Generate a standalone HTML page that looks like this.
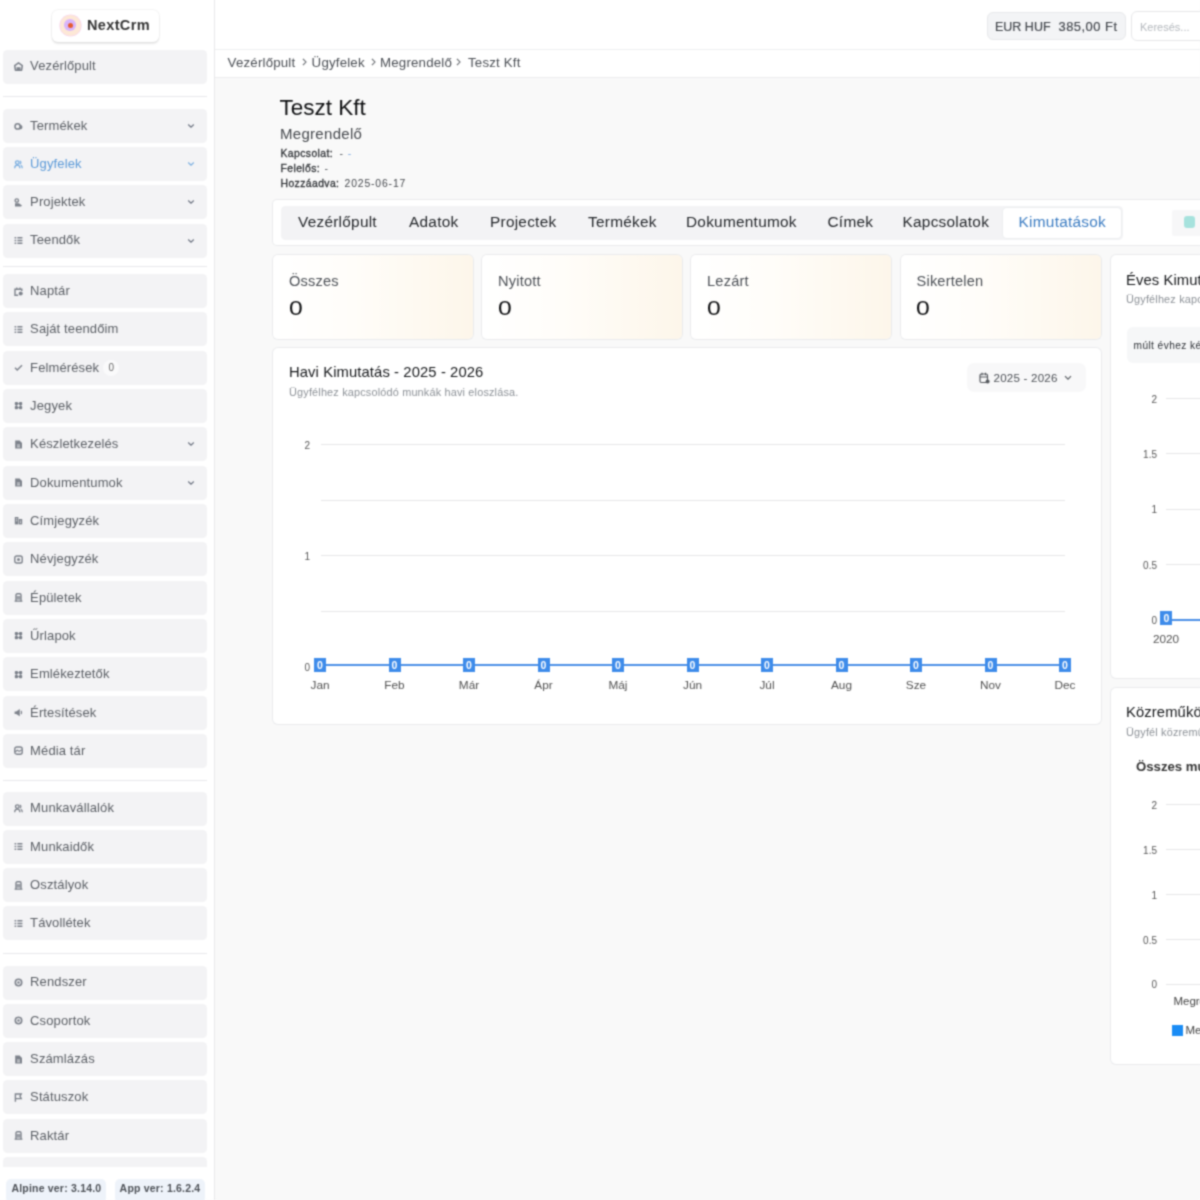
<!DOCTYPE html>
<html><head><meta charset="utf-8">
<style>
*{box-sizing:border-box;margin:0;padding:0}
html,body{width:1200px;height:1200px;overflow:hidden}
body{position:relative;background:#f9f9f9;font-family:"Liberation Sans",sans-serif;color:#1f2328}
.abs{position:absolute}
#wrap{position:absolute;left:0;top:0;width:1200px;height:1200px;background:#f9f9f9;filter:url(#bl)}
#side{position:absolute;left:0;top:0;width:215px;height:1200px;background:#fff;border-right:1.5px solid #e8e8ea}
.logo{position:absolute;left:51.5px;top:10px;width:107.5px;height:32px;background:#fff;border-radius:6px;box-shadow:0 1.5px 2px rgba(0,0,0,.09),0 0 0 1px rgba(0,0,0,.035)}
.logo .c1{position:absolute;left:8.3px;top:4.8px;width:21px;height:21px;border-radius:50%;background:#fde8d6;box-shadow:0 0 0 .6px #f6d3f0}
.logo .c2{position:absolute;left:4.3px;top:4.3px;width:12.4px;height:12.4px;border-radius:50%;background:#d9b5fb}
.logo .c3{position:absolute;left:3.7px;top:3.7px;width:5px;height:5px;border-radius:50%;background:#e65a2c}
.logo .t{position:absolute;left:35.5px;top:6.6px;font-size:14.5px;font-weight:bold;color:#333;letter-spacing:.35px}
.it{position:absolute;left:3.3px;width:203.3px;height:34px;background:#f3f3f5;border-radius:4.5px;color:#5c6066}
.it .ic{position:absolute;left:10.5px;top:12.5px;color:#7d828b}
.it .lb{position:absolute;left:26.8px;top:8.9px;font-size:13px;letter-spacing:.12px;white-space:nowrap}
.it .chev{position:absolute;left:184px;top:14px;color:#6b7280}
.it.act{color:#5b9ad8}
.it.act .ic,.it.act .chev{color:#7aaee0}
.it .bdg{position:absolute;left:100px;top:9px;width:16px;height:16px;border-radius:50%;background:#fafafb;font-size:10px;text-align:center;line-height:16px;color:#666}
.sep{position:absolute;left:3.3px;width:203.3px;height:1px;background:#e9e9eb}
.foot{position:absolute;left:0;top:1167px;width:214px;height:33px;background:#fff}
.ver{position:absolute;top:11.5px;height:24px;border-radius:5px;background:#eef3fa;font-size:10.5px;font-weight:bold;color:#4d5157;padding:3.5px 0 0 5px;white-space:nowrap;letter-spacing:.2px}
#hdr{position:absolute;left:215px;top:0;width:985px;height:49.5px;background:#fff;border-bottom:1px solid #eeeff1}
.cur{position:absolute;left:771.5px;top:11.5px;width:139.5px;height:28.5px;background:#f3f4f6;border:1px solid #e8e9eb;border-radius:6px;font-size:12.9px;color:#44484e;white-space:nowrap;-webkit-text-stroke:.2px #44484e}
.srch{position:absolute;left:916px;top:10.5px;width:90px;height:30.5px;background:#fff;border:1px solid #e6e7e9;border-radius:6px;font-size:11px;color:#b4b8bd;padding:9px 0 0 8px;white-space:nowrap}
#bc{position:absolute;left:215px;top:49.5px;width:985px;height:28px;background:#fff;border-bottom:1px solid #ececee;font-size:13.3px;color:#4b4f55;white-space:nowrap;letter-spacing:.18px}
.h1{position:absolute;left:279.5px;top:95px;font-size:22.5px;color:#0e0f11;white-space:nowrap}
.h2{position:absolute;left:280px;top:125px;font-size:15px;color:#46494e;white-space:nowrap;letter-spacing:.3px}
.meta{position:absolute;left:280.5px;font-size:10.4px;color:#55595e;white-space:nowrap;letter-spacing:.05px}
.meta b{font-weight:normal;color:#2f3236;letter-spacing:.4px;-webkit-text-stroke:.3px #2f3236}
.tabs{position:absolute;left:273px;top:200px;width:940px;height:45px;background:#fff;border-radius:4px;box-shadow:0 0 0 1px #eaebed}
.pill{position:absolute;left:7.7px;top:6px;width:842px;height:33.5px;background:#f3f3f5;border-radius:4.5px}
.tab{position:absolute;top:12.5px;font-size:15.4px;color:#24272b;white-space:nowrap;letter-spacing:.25px}
.tab.act{color:#3b7cc2}
.atab{position:absolute;left:730px;top:7.5px;width:118px;height:30.5px;background:#fff;border-radius:4px;box-shadow:0 0 0 1px #eceef0}
.tsq{position:absolute;left:899px;top:9.6px;width:41px;height:26.3px;background:#f7f7f8;border-radius:2px}
.tsq i{position:absolute;left:11.6px;top:6.8px;width:11px;height:11.2px;border-radius:3px;background:#a6e2dd}
.card{position:absolute;background:#fff;border-radius:5px;box-shadow:0 0 0 1px #eaebed}
.stat{top:254.5px;height:84px;width:200px;background:linear-gradient(90deg,#fff 0%,#fffdf9 40%,#fdf6ea 100%)}
.stat .l{position:absolute;left:16px;top:18px;font-size:14.6px;color:#4c5056;white-space:nowrap;letter-spacing:.2px}
.stat .v{position:absolute;left:15.5px;top:42.5px;font-size:20.3px;color:#0f1012;transform:scaleX(1.22);transform-origin:0 0}
.ctitle{position:absolute;font-size:14.8px;color:#16181b;white-space:nowrap;letter-spacing:.1px}
.csub{position:absolute;font-size:10.9px;color:#8c9197;white-space:nowrap;letter-spacing:.17px}
.grid{position:absolute;height:1px;background:#e6e6e8}
.yl{position:absolute;font-size:10px;color:#555;text-align:right;width:20px;white-space:nowrap}
.xl{position:absolute;width:40px;text-align:center;font-size:11.8px;color:#505050;white-space:nowrap}
.mk{position:absolute;width:12px;height:14px;background:#3d8bea;color:#fff;font-size:10.5px;font-weight:bold;text-align:center;line-height:14px}
.dd{position:absolute;left:966.5px;top:362.5px;width:119px;height:29.5px;background:#f8f8f9;border-radius:7px}
</style></head><body><svg width="0" height="0" style="position:absolute"><filter id="bl" x="0" y="0" width="100%" height="100%" color-interpolation-filters="sRGB"><feConvolveMatrix order="5" kernelMatrix="0.00009 0.00198 0.00548 0.00198 0.00009 0.00198 0.04220 0.11707 0.04220 0.00198 0.00548 0.11707 0.32480 0.11707 0.00548 0.00198 0.04220 0.11707 0.04220 0.00198 0.00009 0.00198 0.00548 0.00198 0.00009" divisor="1" edgeMode="duplicate"/></filter></svg><div id="wrap">
<div id="side">
<div class="logo"><div class="c1"><div class="c2"><div class="c3"></div></div></div><div class="t">NextCrm</div></div>
<div class="it" style="top:49.50px"><svg class="ic" width="9" height="9" viewBox="0 0 9 9"><path d="M4.5 .8L8.3 3.6 7.6 8.2H1.4L.7 3.6z" fill="none" stroke="currentColor" stroke-width="1.5" stroke-linejoin="round"/><path d="M2.5 5.2h4v3h-4z" fill="currentColor"/></svg><span class="lb">Vezérlőpult</span></div>
<div class="it" style="top:109.00px"><svg class="ic" width="9" height="9" viewBox="0 0 9 9"><circle cx="3.6" cy="4.4" r="2.6" fill="none" stroke="currentColor" stroke-width="1.5"/><path d="M5.2 2.8C7.5 2.6 8.6 3.8 8.4 5.4 8.2 7 6.6 7.6 5 7.2 6.2 6 6.2 4 5.2 2.8z" fill="currentColor"/></svg><span class="lb">Termékek</span><svg class="chev" width="8" height="6" viewBox="0 0 8 6"><path d="M1.2 1.5L4 4.2 6.8 1.5" fill="none" stroke="currentColor" stroke-width="1.1"/></svg></div>
<div class="it act" style="top:147.20px"><svg class="ic" width="9" height="9" viewBox="0 0 9 9"><circle cx="3.3" cy="2.6" r="1.8" fill="none" stroke="currentColor" stroke-width="1.3"/><path d="M.7 8.2c0-2 1.1-3 2.6-3s2.6 1 2.6 3" fill="none" stroke="currentColor" stroke-width="1.3"/><path d="M5.8 1a1.7 1.7 0 010 3.2M6.8 5.4c1 .5 1.5 1.4 1.5 2.8" fill="none" stroke="currentColor" stroke-width="1.2"/></svg><span class="lb">Ügyfelek</span><svg class="chev" width="8" height="6" viewBox="0 0 8 6"><path d="M1.2 1.5L4 4.2 6.8 1.5" fill="none" stroke="currentColor" stroke-width="1.1"/></svg></div>
<div class="it" style="top:185.40px"><svg class="ic" width="9" height="9" viewBox="0 0 9 9"><circle cx="2.8" cy="2.5" r="1.7" fill="none" stroke="currentColor" stroke-width="1.3"/><path d="M1 8.5V5.2h3.8l3.2 2.3-1 1z" fill="currentColor"/></svg><span class="lb">Projektek</span><svg class="chev" width="8" height="6" viewBox="0 0 8 6"><path d="M1.2 1.5L4 4.2 6.8 1.5" fill="none" stroke="currentColor" stroke-width="1.1"/></svg></div>
<div class="it" style="top:223.50px"><svg class="ic" width="9" height="9" viewBox="0 0 9 9"><path d="M.6 1.8h1.6M.6 4.5h1.6M.6 7.2h1.6M3.4 1.8h5M3.4 4.5h5M3.4 7.2h5" stroke="currentColor" stroke-width="1.5"/></svg><span class="lb">Teendők</span><svg class="chev" width="8" height="6" viewBox="0 0 8 6"><path d="M1.2 1.5L4 4.2 6.8 1.5" fill="none" stroke="currentColor" stroke-width="1.1"/></svg></div>
<div class="it" style="top:274.00px"><svg class="ic" width="9" height="9" viewBox="0 0 9 9"><path d="M7.8 4V2.2H1v6.1h3.2" fill="none" stroke="currentColor" stroke-width="1.4"/><path d="M2.8.4v2.6M6 .4v2.6" stroke="currentColor" stroke-width="1.3"/><circle cx="6.7" cy="6.6" r="2" fill="currentColor"/></svg><span class="lb">Naptár</span></div>
<div class="it" style="top:312.33px"><svg class="ic" width="9" height="9" viewBox="0 0 9 9"><path d="M.6 1.8h1.6M.6 4.5h1.6M.6 7.2h1.6M3.4 1.8h5M3.4 4.5h5M3.4 7.2h5" stroke="currentColor" stroke-width="1.5"/></svg><span class="lb">Saját teendőim</span></div>
<div class="it" style="top:350.66px"><svg class="ic" width="9" height="9" viewBox="0 0 9 9"><path d="M1 4.8l2.2 2.2L8 2.2" fill="none" stroke="currentColor" stroke-width="1.4"/></svg><span class="lb">Felmérések</span><span class="bdg">0</span></div>
<div class="it" style="top:388.99px"><svg class="ic" width="9" height="9" viewBox="0 0 9 9"><rect x=".8" y="1" width="3.2" height="3.2" rx=".9" fill="currentColor"/><rect x="5" y="1" width="3.2" height="3.2" rx=".9" fill="currentColor"/><rect x=".8" y="5" width="3.2" height="3.2" rx=".9" fill="currentColor"/><rect x="5" y="5" width="3.2" height="3.2" rx=".9" fill="currentColor"/><path d="M2.4 2.6h4.2M2.4 6.6h4.2M2.4 2.6v4M6.6 2.6v4" stroke="currentColor" stroke-width=".9"/></svg><span class="lb">Jegyek</span></div>
<div class="it" style="top:427.32px"><svg class="ic" width="9" height="9" viewBox="0 0 9 9"><path d="M1.2.6h4.4l2.4 2.4v5.6H1.2z" fill="currentColor"/><path d="M3 5h3M3 6.8h3" stroke="#f3f4f6" stroke-width=".8"/></svg><span class="lb">Készletkezelés</span><svg class="chev" width="8" height="6" viewBox="0 0 8 6"><path d="M1.2 1.5L4 4.2 6.8 1.5" fill="none" stroke="currentColor" stroke-width="1.1"/></svg></div>
<div class="it" style="top:465.65px"><svg class="ic" width="9" height="9" viewBox="0 0 9 9"><path d="M1.2.6h4.4l2.4 2.4v5.6H1.2z" fill="currentColor"/><path d="M3 5h3M3 6.8h3" stroke="#f3f4f6" stroke-width=".8"/></svg><span class="lb">Dokumentumok</span><svg class="chev" width="8" height="6" viewBox="0 0 8 6"><path d="M1.2 1.5L4 4.2 6.8 1.5" fill="none" stroke="currentColor" stroke-width="1.1"/></svg></div>
<div class="it" style="top:503.98px"><svg class="ic" width="9" height="9" viewBox="0 0 9 9"><rect x=".8" y="1" width="3.6" height="7.4" fill="currentColor"/><rect x="4.8" y="3" width="3.4" height="5.4" fill="currentColor"/><path d="M2 2.8h1.2M2 4.8h1.2M6 5h1M6 6.6h1" stroke="#f3f4f6" stroke-width=".9"/></svg><span class="lb">Címjegyzék</span></div>
<div class="it" style="top:542.31px"><svg class="ic" width="9" height="9" viewBox="0 0 9 9"><rect x=".8" y="1" width="7.4" height="7" rx="1.8" fill="none" stroke="currentColor" stroke-width="1.4"/><circle cx="4.5" cy="4.5" r="1.5" fill="currentColor"/></svg><span class="lb">Névjegyzék</span></div>
<div class="it" style="top:580.64px"><svg class="ic" width="9" height="9" viewBox="0 0 9 9"><path d="M2 8.2V2a1.2 1.2 0 011.2-1.2h2.6A1.2 1.2 0 017 2v6.2" fill="none" stroke="currentColor" stroke-width="1.4"/><path d="M.6 8.2h7.8M2.5 4h4M2.5 5.8h4" stroke="currentColor" stroke-width="1.3"/></svg><span class="lb">Épületek</span></div>
<div class="it" style="top:618.97px"><svg class="ic" width="9" height="9" viewBox="0 0 9 9"><rect x=".8" y="1" width="3.2" height="3.2" rx=".9" fill="currentColor"/><rect x="5" y="1" width="3.2" height="3.2" rx=".9" fill="currentColor"/><rect x=".8" y="5" width="3.2" height="3.2" rx=".9" fill="currentColor"/><rect x="5" y="5" width="3.2" height="3.2" rx=".9" fill="currentColor"/><path d="M2.4 2.6h4.2M2.4 6.6h4.2M2.4 2.6v4M6.6 2.6v4" stroke="currentColor" stroke-width=".9"/></svg><span class="lb">Űrlapok</span></div>
<div class="it" style="top:657.30px"><svg class="ic" width="9" height="9" viewBox="0 0 9 9"><rect x=".8" y="1" width="3.2" height="3.2" rx=".9" fill="currentColor"/><rect x="5" y="1" width="3.2" height="3.2" rx=".9" fill="currentColor"/><rect x=".8" y="5" width="3.2" height="3.2" rx=".9" fill="currentColor"/><rect x="5" y="5" width="3.2" height="3.2" rx=".9" fill="currentColor"/><path d="M2.4 2.6h4.2M2.4 6.6h4.2M2.4 2.6v4M6.6 2.6v4" stroke="currentColor" stroke-width=".9"/></svg><span class="lb">Emlékeztetők</span></div>
<div class="it" style="top:695.63px"><svg class="ic" width="9" height="9" viewBox="0 0 9 9"><path d="M.6 3.4v2.6h1.6l3.6 2.3V1.1L2.2 3.4z" fill="currentColor"/><path d="M6.9 3c.9.6.9 2.4 0 3" fill="none" stroke="currentColor" stroke-width="1.2"/></svg><span class="lb">Értesítések</span></div>
<div class="it" style="top:733.96px"><svg class="ic" width="9" height="9" viewBox="0 0 9 9"><rect x=".8" y="1" width="7.4" height="7.2" rx="2" fill="none" stroke="currentColor" stroke-width="1.4"/><path d="M1.2 5.8l2.2-1.6 1.8 1.2 2.6-1.6" fill="none" stroke="currentColor" stroke-width="1.2"/></svg><span class="lb">Média tár</span></div>
<div class="it" style="top:791.50px"><svg class="ic" width="9" height="9" viewBox="0 0 9 9"><circle cx="3.3" cy="2.6" r="1.8" fill="none" stroke="currentColor" stroke-width="1.3"/><path d="M.7 8.2c0-2 1.1-3 2.6-3s2.6 1 2.6 3" fill="none" stroke="currentColor" stroke-width="1.3"/><path d="M5.8 1a1.7 1.7 0 010 3.2M6.8 5.4c1 .5 1.5 1.4 1.5 2.8" fill="none" stroke="currentColor" stroke-width="1.2"/></svg><span class="lb">Munkavállalók</span></div>
<div class="it" style="top:829.83px"><svg class="ic" width="9" height="9" viewBox="0 0 9 9"><path d="M.6 1.8h1.6M.6 4.5h1.6M.6 7.2h1.6M3.4 1.8h5M3.4 4.5h5M3.4 7.2h5" stroke="currentColor" stroke-width="1.5"/></svg><span class="lb">Munkaidők</span></div>
<div class="it" style="top:868.16px"><svg class="ic" width="9" height="9" viewBox="0 0 9 9"><path d="M2 8.2V2a1.2 1.2 0 011.2-1.2h2.6A1.2 1.2 0 017 2v6.2" fill="none" stroke="currentColor" stroke-width="1.4"/><path d="M.6 8.2h7.8M2.5 4h4M2.5 5.8h4" stroke="currentColor" stroke-width="1.3"/></svg><span class="lb">Osztályok</span></div>
<div class="it" style="top:906.49px"><svg class="ic" width="9" height="9" viewBox="0 0 9 9"><path d="M.6 1.8h1.6M.6 4.5h1.6M.6 7.2h1.6M3.4 1.8h5M3.4 4.5h5M3.4 7.2h5" stroke="currentColor" stroke-width="1.5"/></svg><span class="lb">Távollétek</span></div>
<div class="it" style="top:965.50px"><svg class="ic" width="9" height="9" viewBox="0 0 9 9"><circle cx="4.5" cy="4.5" r="3.2" fill="none" stroke="currentColor" stroke-width="1.6"/><circle cx="4.5" cy="4.5" r="1.2" fill="currentColor"/></svg><span class="lb">Rendszer</span></div>
<div class="it" style="top:1003.83px"><svg class="ic" width="9" height="9" viewBox="0 0 9 9"><circle cx="4.5" cy="4.5" r="3.2" fill="none" stroke="currentColor" stroke-width="1.6"/><circle cx="4.5" cy="4.5" r="1.2" fill="currentColor"/></svg><span class="lb">Csoportok</span></div>
<div class="it" style="top:1042.16px"><svg class="ic" width="9" height="9" viewBox="0 0 9 9"><path d="M1.2.6h4.4l2.4 2.4v5.6H1.2z" fill="currentColor"/><path d="M3 5h3M3 6.8h3" stroke="#f3f4f6" stroke-width=".8"/></svg><span class="lb">Számlázás</span></div>
<div class="it" style="top:1080.49px"><svg class="ic" width="9" height="9" viewBox="0 0 9 9"><path d="M1.4 8.8V1h5.8L6 3.2l1.2 2.4H1.4" fill="none" stroke="currentColor" stroke-width="1.4"/></svg><span class="lb">Státuszok</span></div>
<div class="it" style="top:1118.82px"><svg class="ic" width="9" height="9" viewBox="0 0 9 9"><path d="M2 8.2V2a1.2 1.2 0 011.2-1.2h2.6A1.2 1.2 0 017 2v6.2" fill="none" stroke="currentColor" stroke-width="1.4"/><path d="M.6 8.2h7.8M2.5 4h4M2.5 5.8h4" stroke="currentColor" stroke-width="1.3"/></svg><span class="lb">Raktár</span></div>
<div class="it" style="top:1157.15px"></div>
<div class="sep" style="top:96.2px"></div>
<div class="sep" style="top:265.8px"></div>
<div class="sep" style="top:779.5px"></div>
<div class="sep" style="top:952.5px"></div>
<div class="foot">
<div class="ver" style="left:6.4px;width:100px">Alpine ver: 3.14.0</div>
<div class="ver" style="left:114.6px;width:90px">App ver: 1.6.2.4</div>
</div>
</div>
<div id="hdr">
<div class="cur"><span class="abs" style="left:7.5px;top:7px;font-size:12.5px">EUR HUF</span><span class="abs" style="left:71px;top:6.5px;letter-spacing:.5px">385,00 Ft</span></div>
<div class="srch">Keresés...</div>
</div>
<div id="bc"><span class="abs" style="left:12.6px;top:5.5px">Vezérlőpult</span><svg class="abs" style="left:87.3px;top:8.3px" width="5" height="8" viewBox="0 0 5 8"><path d="M.9 .9L4 4 .9 7.1" fill="none" stroke="#5f6368" stroke-width="1.05"/></svg><span class="abs" style="left:96.6px;top:5.5px">Ügyfelek</span><svg class="abs" style="left:155.7px;top:8.3px" width="5" height="8" viewBox="0 0 5 8"><path d="M.9 .9L4 4 .9 7.1" fill="none" stroke="#5f6368" stroke-width="1.05"/></svg><span class="abs" style="left:165px;top:5.5px">Megrendelő</span><svg class="abs" style="left:241.4px;top:8.3px" width="5" height="8" viewBox="0 0 5 8"><path d="M.9 .9L4 4 .9 7.1" fill="none" stroke="#5f6368" stroke-width="1.05"/></svg><span class="abs" style="left:253px;top:5.5px">Teszt Kft</span></div>

<div class="h1">Teszt Kft</div>
<div class="h2">Megrendelő</div>
<div class="meta" style="top:147.5px"><b>Kapcsolat:</b><span class="abs" style="left:59px;top:0">-</span><span class="abs" style="left:67.3px;top:0;color:#7aa7e0">-</span></div>
<div class="meta" style="top:162.5px"><b>Felelős:</b><span class="abs" style="left:44px;top:0">-</span></div>
<div class="meta" style="top:177.5px"><b>Hozzáadva:</b><span class="abs" style="left:64px;top:0;letter-spacing:.85px;color:#45484d">2025-06-17</span></div>

<div class="tabs">
<div class="pill"></div>
<div class="atab"></div>
<div class="tab" style="left:25px">Vezérlőpult</div>
<div class="tab" style="left:136px">Adatok</div>
<div class="tab" style="left:217px">Projectek</div>
<div class="tab" style="left:315px">Termékek</div>
<div class="tab" style="left:413px">Dokumentumok</div>
<div class="tab" style="left:554.5px">Címek</div>
<div class="tab" style="left:629.5px">Kapcsolatok</div>
<div class="tab act" style="left:745.6px">Kimutatások</div>
<div class="tsq"><i></i></div>
</div>

<div class="card stat" style="left:273px"><div class="l">Összes</div><div class="v">0</div></div>
<div class="card stat" style="left:482px"><div class="l">Nyitott</div><div class="v">0</div></div>
<div class="card stat" style="left:691px"><div class="l">Lezárt</div><div class="v">0</div></div>
<div class="card stat" style="left:900.5px"><div class="l">Sikertelen</div><div class="v">0</div></div>

<div class="card" style="left:273px;top:347.5px;width:828px;height:376.5px"></div>
<div class="ctitle" style="left:289px;top:364px">Havi Kimutatás - 2025 - 2026</div>
<div class="csub" style="left:289px;top:386px">Ügyfélhez kapcsolódó munkák havi eloszlása.</div>
<div class="dd"><svg class="abs" style="left:12px;top:9px" width="11" height="12" viewBox="0 0 11 12"><rect x="1" y="2" width="7.5" height="8.5" rx="1.5" fill="none" stroke="#55595e" stroke-width="1.2"/><path d="M3 .8v2.4M6.5 .8v2.4M1 5h7.5" stroke="#55595e" stroke-width="1.1"/><circle cx="8.6" cy="9.4" r="2" fill="#55595e"/></svg><span class="abs" style="left:27px;top:8px;font-size:11.6px;color:#4b4f55;white-space:nowrap;letter-spacing:.2px">2025 - 2026</span><svg class="abs" style="left:97px;top:12px" width="8" height="6" viewBox="0 0 8 6"><path d="M1 1.2L4 4.2 7 1.2" fill="none" stroke="#55595e" stroke-width="1.1"/></svg></div>
<div class="grid" style="left:320.5px;top:444px;width:744.5px"></div>
<div class="grid" style="left:320.5px;top:499.5px;width:744.5px"></div>
<div class="grid" style="left:320.5px;top:555px;width:744.5px"></div>
<div class="grid" style="left:320.5px;top:610.5px;width:744.5px"></div>
<div class="yl" style="left:290px;top:439.5px">2</div>
<div class="yl" style="left:290px;top:550.5px">1</div>
<div class="yl" style="left:290px;top:661.5px">0</div>
<div class="abs" style="left:320px;top:664.3px;width:745px;height:2px;background:#4a8fe6"></div>
<div class="mk" style="left:314.0px;top:657.5px">0</div>
<div class="xl" style="left:300.0px;top:678px">Jan</div>
<div class="mk" style="left:388.5px;top:657.5px">0</div>
<div class="xl" style="left:374.5px;top:678px">Feb</div>
<div class="mk" style="left:463.0px;top:657.5px">0</div>
<div class="xl" style="left:449.0px;top:678px">Már</div>
<div class="mk" style="left:537.5px;top:657.5px">0</div>
<div class="xl" style="left:523.5px;top:678px">Ápr</div>
<div class="mk" style="left:612.0px;top:657.5px">0</div>
<div class="xl" style="left:598.0px;top:678px">Máj</div>
<div class="mk" style="left:686.5px;top:657.5px">0</div>
<div class="xl" style="left:672.5px;top:678px">Jún</div>
<div class="mk" style="left:761.0px;top:657.5px">0</div>
<div class="xl" style="left:747.0px;top:678px">Júl</div>
<div class="mk" style="left:835.5px;top:657.5px">0</div>
<div class="xl" style="left:821.5px;top:678px">Aug</div>
<div class="mk" style="left:910.0px;top:657.5px">0</div>
<div class="xl" style="left:896.0px;top:678px">Sze</div>
<div class="mk" style="left:984.5px;top:657.5px">0</div>
<div class="xl" style="left:970.5px;top:678px">Nov</div>
<div class="mk" style="left:1059.0px;top:657.5px">0</div>
<div class="xl" style="left:1045.0px;top:678px">Dec</div>

<div class="card" style="left:1110.5px;top:254.5px;width:120px;height:423px"></div>
<div class="ctitle" style="left:1126px;top:272px">Éves Kimutatás</div>
<div class="csub" style="left:1126px;top:293px">Ügyfélhez kapcsolódó</div>
<div class="abs" style="left:1127px;top:327px;width:100px;height:36px;background:#f6f7f8;border-radius:6px"></div>
<div class="abs" style="left:1133.5px;top:340px;font-size:10.2px;color:#2d3136;white-space:nowrap;letter-spacing:.4px">múlt évhez képest</div>
<div class="grid" style="left:1166px;top:398px;width:40px"></div>
<div class="grid" style="left:1166px;top:453px;width:40px"></div>
<div class="grid" style="left:1166px;top:508.5px;width:40px"></div>
<div class="grid" style="left:1166px;top:564px;width:40px"></div>
<div class="yl" style="left:1137px;top:393.5px">2</div>
<div class="yl" style="left:1137px;top:448.5px">1.5</div>
<div class="yl" style="left:1137px;top:504.0px">1</div>
<div class="yl" style="left:1137px;top:559.5px">0.5</div>
<div class="yl" style="left:1137px;top:614.5px">0</div>
<div class="abs" style="left:1166px;top:618.5px;width:40px;height:2px;background:#4a8fe6"></div>
<div class="mk" style="left:1160.3px;top:611px">0</div>
<div class="xl" style="left:1146px;top:632px">2020</div>

<div class="card" style="left:1110.5px;top:688px;width:120px;height:376px"></div>
<div class="ctitle" style="left:1126px;top:704px">Közreműködők</div>
<div class="csub" style="left:1126px;top:726px">Ügyfél közreműködők</div>
<div class="abs" style="left:1136px;top:759px;font-size:13.2px;font-weight:bold;color:#333;white-space:nowrap">Összes munka</div>
<div class="grid" style="left:1166px;top:804px;width:40px"></div>
<div class="grid" style="left:1166px;top:849px;width:40px"></div>
<div class="grid" style="left:1166px;top:894px;width:40px"></div>
<div class="grid" style="left:1166px;top:939px;width:40px"></div>
<div class="grid" style="left:1166px;top:983.5px;width:40px"></div>
<div class="yl" style="left:1137px;top:799.5px">2</div>
<div class="yl" style="left:1137px;top:844.5px">1.5</div>
<div class="yl" style="left:1137px;top:889.5px">1</div>
<div class="yl" style="left:1137px;top:934.5px">0.5</div>
<div class="yl" style="left:1137px;top:979.0px">0</div>
<div class="abs" style="left:1173.5px;top:995px;font-size:11.5px;color:#444;white-space:nowrap">Megrendelő</div>
<div class="abs" style="left:1172px;top:1024.5px;width:11px;height:11px;background:#1a8cf5"></div>
<div class="abs" style="left:1185.5px;top:1023.5px;font-size:11.5px;color:#444;white-space:nowrap">Megrendelő</div>
</div></body></html>
